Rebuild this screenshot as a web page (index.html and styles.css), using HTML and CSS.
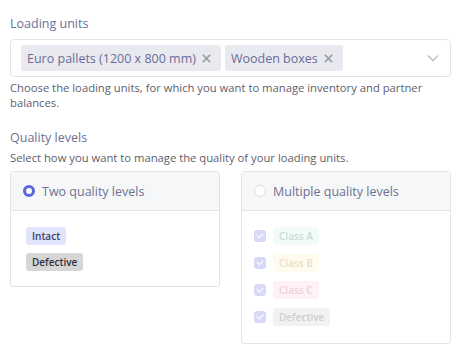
FILE: index.html
```html
<!DOCTYPE html>
<html lang="en">
  <head>
    <meta charset="UTF-8" />
    <meta name="viewport" content="width=device-width, initial-scale=1.0" />
    <title>Loading units settings</title>
    <link rel="stylesheet" href="styles.css">
  </head>
  <body>
    <div class="field">
      <div class="field-label">Loading units</div>
      <div class="select">
        <div class="chips">
          <span class="chip">Euro pallets (1200 x 800 mm)
            <svg class="chip-x" viewBox="0 0 10 10" width="9" height="9"><path d="M1 1L9 9M9 1L1 9" /></svg>
          </span>
          <span class="chip">Wooden boxes
            <svg class="chip-x" viewBox="0 0 10 10" width="9" height="9"><path d="M1 1L9 9M9 1L1 9" /></svg>
          </span>
        </div>
        <svg class="chevron" viewBox="0 0 12 8" width="12" height="8"><path d="M1 1.5L6 6.5L11 1.5" /></svg>
      </div>
      <p class="help">Choose the loading units, for which you want to manage inventory and partner balances.</p>
    </div>

    <div class="field">
      <div class="field-label quality-label">Quality levels</div>
      <p class="help sub">Select how you want to manage the quality of your loading units.</p>

      <div class="options">
        <div class="option">
          <div class="option-head">
            <span class="radio checked"></span>
            <span class="option-title">Two quality levels</span>
          </div>
          <div class="option-body">
            <div class="tag tag-intact">Intact</div>
            <div class="tag tag-defective">Defective</div>
          </div>
        </div>

        <div class="option">
          <div class="option-head">
            <span class="radio"></span>
            <span class="option-title">Multiple quality levels</span>
          </div>
          <div class="option-body disabled">
            <div class="row"><span class="check"></span><span class="tag tag-a">Class A</span></div>
            <div class="row"><span class="check"></span><span class="tag tag-b">Class B</span></div>
            <div class="row"><span class="check"></span><span class="tag tag-c">Class C</span></div>
            <div class="row"><span class="check"></span><span class="tag tag-d">Defective</span></div>
          </div>
        </div>
      </div>
    </div>
  </body>
</html>
```

FILE: styles.css
```css
:root {
  --label-color: #6e7093;
  --border: #e3e4e8;
  --head-bg: #f6f7f9;
  --accent: #5b64d9;
}

body {
  margin: 0;
  padding: 14px 11px 0 10px;
  background: #fff;
  font-family: "Open Sans", "Liberation Sans", sans-serif;
  color: #555;
}

.field-label {
  font-size: 12.5px;
  line-height: 20px;
  color: var(--label-color);
  margin-bottom: 5px;
}

.select {
  display: flex;
  align-items: center;
  justify-content: space-between;
  border: 1px solid var(--border);
  border-radius: 4px;
  padding: 5px 11px 5px 10px;
}

.chips {
  display: flex;
  gap: 4px;
}

.chip {
  display: inline-flex;
  align-items: center;
  gap: 6px;
  height: 26px;
  padding: 0 10px 0 6px;
  background: #e9eaf0;
  border-radius: 3px;
  font-size: 12.5px;
  color: #6a6c98;
}

.chip-x path {
  stroke: #9a9ba6;
  stroke-width: 1.7;
  fill: none;
}

.chevron path {
  stroke: #c3c4cb;
  stroke-width: 1.6;
  fill: none;
}

.help {
  margin: 3px 0 0;
  font-size: 11.25px;
  line-height: 15px;
  color: #5d606b;
}

.quality-label {
  margin-top: 18px;
  margin-bottom: 2px;
}

.help.sub {
  margin: 0 0 6px;
}

.options {
  display: grid;
  grid-template-columns: 1fr 1fr;
  gap: 21px;
  align-items: start;
}

.option {
  border: 1px solid var(--border);
  border-radius: 3px;
}

.option-head {
  display: flex;
  align-items: center;
  gap: 7px;
  height: 38px;
  padding: 0 12px;
  background: var(--head-bg);
  border-bottom: 1px solid var(--border);
}

.option-title {
  font-size: 12.5px;
  color: var(--label-color);
}

.radio {
  box-sizing: border-box;
  width: 12px;
  height: 12px;
  border-radius: 50%;
  border: 1px solid #dcdde2;
  background: #fff;
}

.radio.checked {
  border: 3.5px solid var(--accent);
}

.option-body {
  display: flex;
  flex-direction: column;
  align-items: flex-start;
  gap: 8px;
  padding: 16px 15px 15px;
}

.option-body.disabled {
  gap: 9px;
  padding: 16px 12px 17px;
}

.tag {
  display: inline-flex;
  align-items: center;
  height: 18px;
  padding: 0 6px;
  border-radius: 3px;
  font-size: 10px;
  font-weight: 600;
  color: #2e3040;
}

.tag-intact {
  background: #e1e4fb;
  color: #3c3f66;
}

.tag-defective {
  background: #d6d6d6;
}

.row {
  display: flex;
  align-items: center;
  gap: 7px;
}

.check {
  position: relative;
  width: 12px;
  height: 12px;
  border-radius: 3px;
  background: #d7d9f7;
}

.check::after {
  content: "";
  position: absolute;
  left: 4px;
  top: 2px;
  width: 3px;
  height: 5px;
  border: solid #fff;
  border-width: 0 1.5px 1.5px 0;
  transform: rotate(45deg);
}

.tag-a {
  background: #f1fbf8;
  color: #c7ddd7;
}

.tag-b {
  background: #fffbef;
  color: #e9e0c6;
}

.tag-c {
  background: #fff1f5;
  color: #edd0d8;
}

.tag-d {
  background: #f2f2f2;
  color: #cfcfcf;
}
```
